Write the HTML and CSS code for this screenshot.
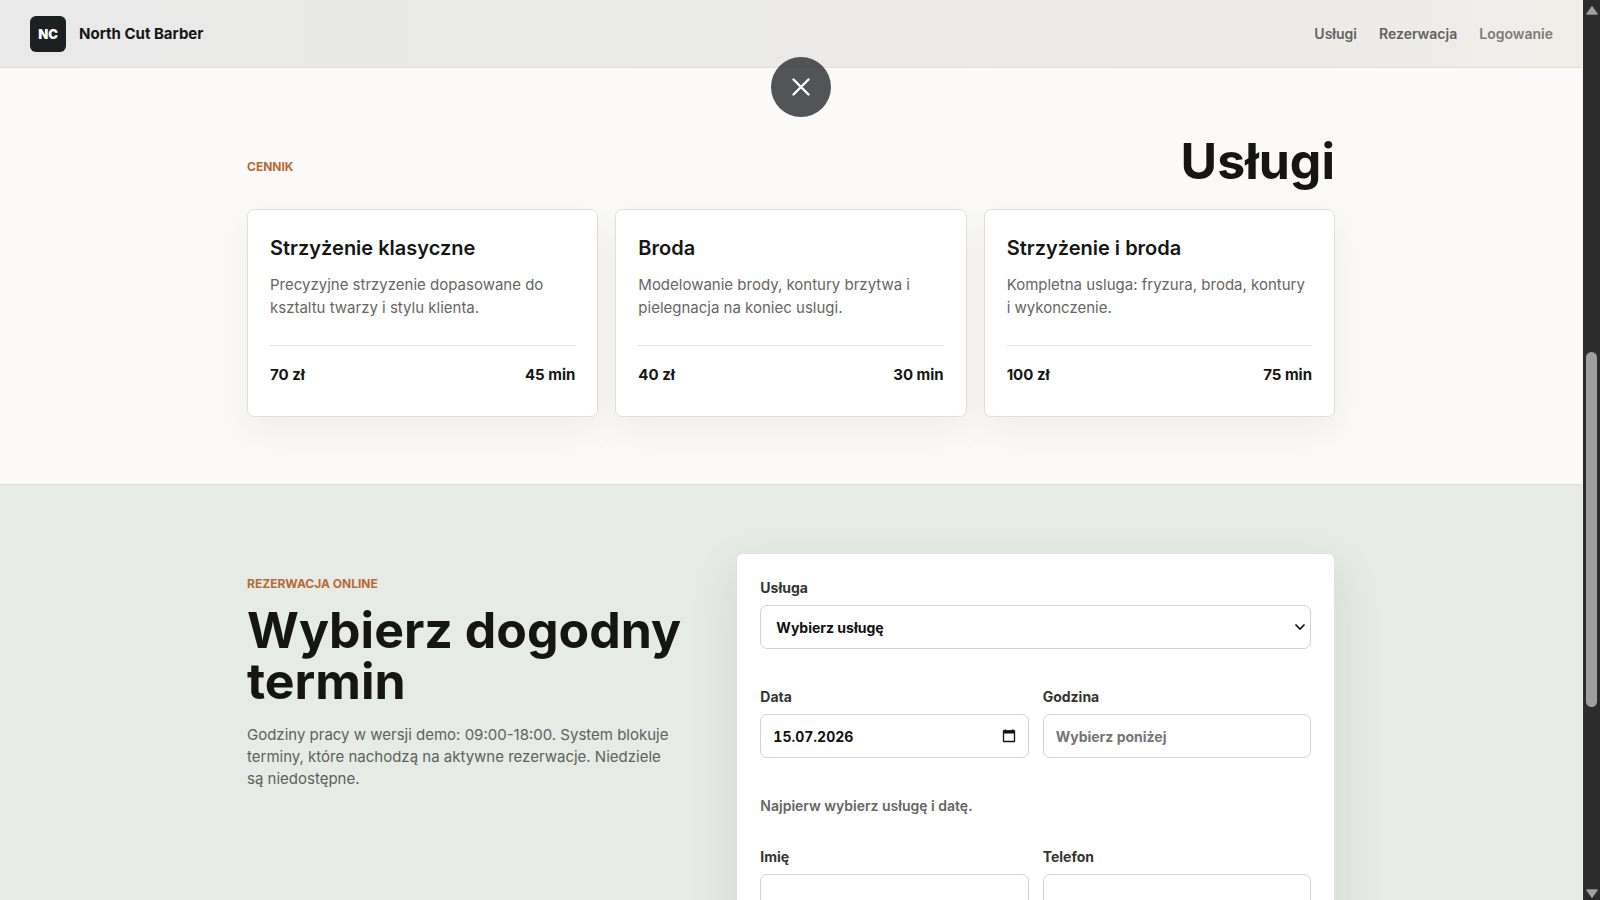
FILE: index.html
```
<!DOCTYPE html>
<html lang="pl">
<head>
<meta charset="utf-8">
<meta name="viewport" content="width=device-width, initial-scale=1">
<title>North Cut Barber</title>
<link rel="stylesheet" href="styles.css">
</head>
<body>
<div class="viewport">
  <div class="page">
    <header class="topbar">
      <a class="brand" href="#"><span class="brand-mark">NC</span><span>North Cut Barber</span></a>
      <nav class="nav">
        <a href="#uslugi">Usługi</a>
        <a href="#rezerwacja">Rezerwacja</a>
        <a class="nav-muted" href="#logowanie">Logowanie</a>
      </nav>
    </header>
    <main>
      <section class="services" id="uslugi">
        <div class="container">
          <div class="section-head">
            <p class="eyebrow">Cennik</p>
            <h2 class="title">Usługi</h2>
          </div>
          <div class="cards">
            <article class="card">
              <h3>Strzyżenie klasyczne</h3>
              <p>Precyzyjne strzyzenie dopasowane do ksztaltu twarzy i stylu klienta.</p>
              <div class="meta"><span>70 zł</span><span>45 min</span></div>
            </article>
            <article class="card">
              <h3>Broda</h3>
              <p>Modelowanie brody, kontury brzytwa i pielegnacja na koniec uslugi.</p>
              <div class="meta"><span>40 zł</span><span>30 min</span></div>
            </article>
            <article class="card">
              <h3>Strzyżenie i broda</h3>
              <p>Kompletna usluga: fryzura, broda, kontury i wykonczenie.</p>
              <div class="meta"><span>100 zł</span><span>75 min</span></div>
            </article>
          </div>
        </div>
      </section>
      <section class="booking" id="rezerwacja">
        <div class="container booking-grid">
          <div class="intro">
            <p class="eyebrow">Rezerwacja online</p>
            <h2 class="title">Wybierz dogodny termin</h2>
            <p class="lead">Godziny pracy w wersji demo: 09:00-18:00. System blokuje terminy, które nachodzą na aktywne rezerwacje. Niedziele są niedostępne.</p>
          </div>
          <form class="form">
            <div class="field wide">
              <label for="service">Usługa</label>
              <div class="control">
                <select id="service"><option>Wybierz usługę</option></select>
                <svg class="chevron" viewBox="0 0 12 8" aria-hidden="true"><path d="M1.500 1.500 6 6l4.500-4.500"/></svg>
              </div>
            </div>
            <div class="field">
              <label for="date">Data</label>
              <div class="control">
                <input class="date" id="date" type="text" value="15.07.2026">
                <button class="picker" type="button" aria-label="Otwórz kalendarz">
                  <svg viewBox="0 0 14 14" aria-hidden="true"><path d="M1.500 2h11v10.500h-11z" fill="none" stroke="currentColor" stroke-width="1.300" stroke-linejoin="round"/><path d="M1 1.500h12v3H1zM2.500.5H4V2H2.500zM10 .5h1.500V2H10z" fill="currentColor"/></svg>
                </button>
              </div>
            </div>
            <div class="field">
              <label for="time">Godzina</label>
              <input id="time" type="text" placeholder="Wybierz poniżej" readonly>
            </div>
            <p class="hint wide">Najpierw wybierz usługę i datę.</p>
            <div class="field">
              <label for="name">Imię</label>
              <input id="name" type="text">
            </div>
            <div class="field">
              <label for="phone">Telefon</label>
              <input id="phone" type="tel">
            </div>
          </form>
        </div>
      </section>
    </main>
  </div>
  <div class="scrollbar" aria-hidden="true">
    <svg class="arrow" viewBox="0 0 12 9"><path d="M6 1 11 8H1z"/></svg>
    <div class="track"><div class="thumb"></div></div>
    <svg class="arrow" viewBox="0 0 12 9"><path d="M6 8 1 1h10z"/></svg>
  </div>
  <button class="close" type="button" aria-label="Zamknij">
    <svg viewBox="0 0 18 18" aria-hidden="true"><path d="m1.500 1.500 15 15m0-15-15 15"/></svg>
  </button>
</div>
</body>
</html>
```
FILE: styles.css
```
* { box-sizing: border-box; }
body { margin: 0; font-family: Inter, "Liberation Sans", sans-serif; font-size: 15px; color: #151614; background: #fbfaf8; }
h2, h3, p { margin: 0; }
a { color: inherit; text-decoration: none; }
.viewport { position: relative; display: flex; height: 100vh; overflow: hidden; }
.page { flex: 1; min-width: 0; overflow: hidden; border-right: 1px solid #f4f4f2; }

.topbar { display: flex; align-items: center; justify-content: space-between; height: 68px; padding: 0 29px 0 30px; background: linear-gradient(90deg, #e8e9e8, #e9e9e7 45%, #edebe8 62%, #eae9e7 75%, #f1eeea); border-bottom: 1px solid #dfdeda; }
.brand { display: flex; align-items: center; gap: 13px; font-weight: 700; }
.brand-mark { display: grid; place-items: center; width: 36px; height: 36px; border-radius: 6px; background: #1d2021; color: #fff; font-size: 13px; font-weight: 900; }
.nav { display: flex; gap: 22px; font-size: 14px; font-weight: 600; color: #62625e; }
.nav-muted { color: #7f7a75; }

.container { max-width: 1088px; margin: 0 auto; }
.services { padding: 68px 0 67px; border-bottom: 1px solid #dedfda; }
.section-head { display: flex; align-items: center; justify-content: space-between; margin-bottom: 22px; }
.section-head .eyebrow { padding-top: 11px; }
.eyebrow { color: #b56b35; font-size: 12px; line-height: 18px; font-weight: 700; text-transform: uppercase; }
.title { font-size: 50px; line-height: 51px; font-weight: 700; }
.cards { display: grid; grid-template-columns: repeat(3, 1fr); gap: 17px; }
.card { padding: 24px 22px 29px; border: 1px solid #dededb; border-radius: 7px; background: #fff; box-shadow: 0 14px 34px rgba(30, 30, 25, .06); }
.card h3 { font-size: 20px; line-height: 28px; font-weight: 600; }
.card p { margin: 11px 0 26px; line-height: 23px; color: #666663; }
.meta { display: flex; justify-content: space-between; padding-top: 17px; border-top: 1px solid #e0e0dd; line-height: 24px; font-weight: 700; }

.booking { padding: 68px 0; background: #e6ebe5; }
.booking-grid { display: grid; grid-template-columns: 8fr 11fr; gap: 0 54px; align-items: start; }
.intro { padding-top: 22px; }
.intro .title { margin: 12px 0 17px; }
.lead { max-width: 430px; line-height: 22px; color: #5b635c; }
.form { display: grid; grid-template-columns: 1fr 1fr; gap: 36px 14px; padding: 22px 23px; border: 1px solid #dfe1dc; border-radius: 7px; background: #fff; box-shadow: 0 18px 50px rgba(30, 35, 30, .1); }
.wide { grid-column: 1 / -1; }
.field { display: grid; gap: 5px; }
label { line-height: 24px; font-size: 14px; font-weight: 700; color: #343532; }
.control { position: relative; display: grid; }
select, input { width: 100%; height: 44px; margin: 0; padding: 0 12px; border: 1px solid #d2d2cf; border-radius: 7px; background: #fff; color: #111; font: 700 14px Inter, "Liberation Sans", sans-serif; }
select { appearance: none; padding: 0 15px; }
input::placeholder { color: #757575; opacity: 1; }
.date { font-variant-numeric: tabular-nums; }
.chevron { position: absolute; right: 5px; top: 18px; width: 12px; height: 8px; fill: none; stroke: #111; stroke-width: 1.7; pointer-events: none; }
.picker { position: absolute; right: 13px; top: 15px; width: 14px; height: 14px; padding: 0; border: 0; background: none; color: #111; }
.picker svg, .close svg { display: block; }
.hint { font-size: 14px; line-height: 24px; font-weight: 600; color: #666663; }
.hint ~ .field { margin-top: -9px; }

.scrollbar { display: flex; flex-direction: column; align-items: center; justify-content: space-between; width: 17px; padding: 6px 0 2px; background: #2c2c2c; }
.arrow { width: 12px; height: 9px; fill: #a0a0a0; stroke: #a0a0a0; stroke-width: 1.5; stroke-linejoin: round; }
.track { flex: 1; width: 11px; padding-top: 337px; }
.thumb { height: 355px; border-radius: 6px; background: #9f9f9f; }
.close { position: absolute; top: 57px; left: 50%; display: grid; place-items: center; width: 60px; height: 60px; margin-left: -29px; padding: 0; border: 0; border-radius: 50%; background: rgba(60, 64, 67, .89); }
.close svg { width: 18px; height: 18px; fill: none; stroke: #fff; stroke-width: 2.4; stroke-linecap: round; }
```
